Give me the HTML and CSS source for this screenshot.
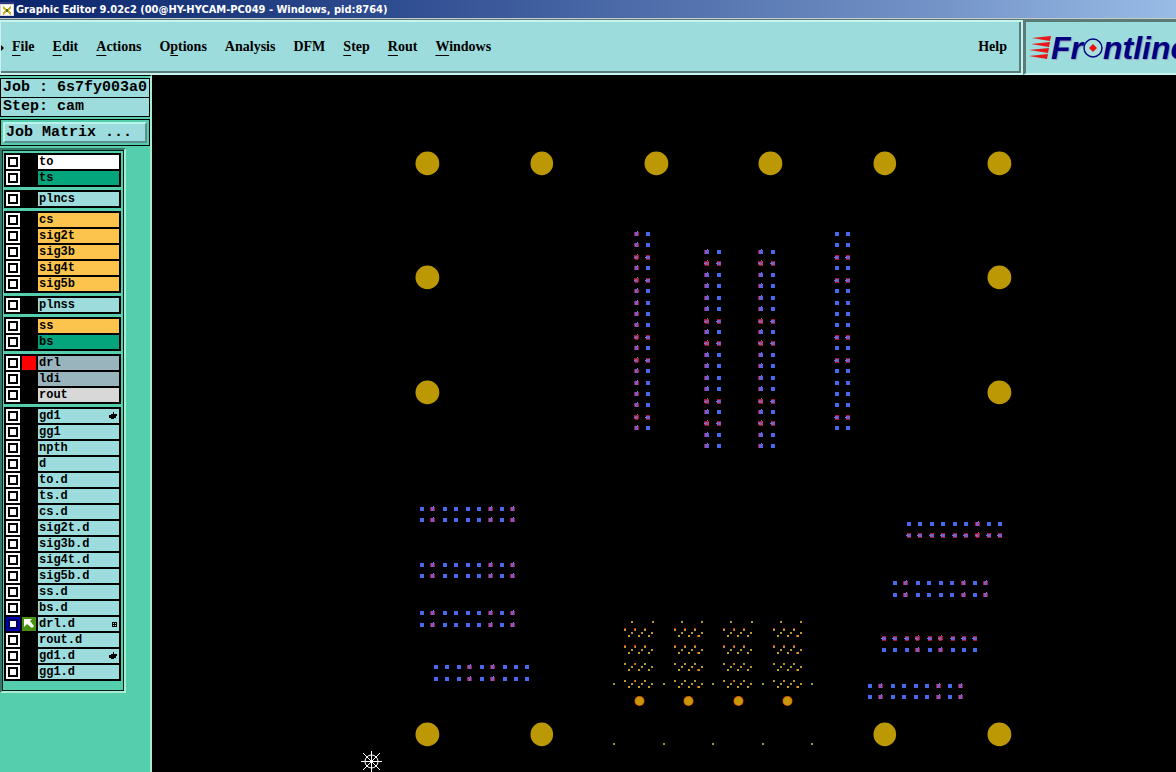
FILE: index.html
```html
<!DOCTYPE html>
<html lang="en">
<head>
    <meta charset="UTF-8">
    <title>Graphic Editor</title>
    <meta name="viewport" content="width=device-width, initial-scale=1.0"/>
    <link rel="stylesheet" href="styles.css">
</head>
<body>
    <div class="wrap">
        <header class="title">
            <svg width="15" height="15" viewBox="0 0 15 15" shape-rendering="crispEdges">
                <rect width="14" height="14" fill="#d8d8d8"/>
                <rect width="14" height="2" fill="#303880"/>
                <rect x="1" y="3" width="12" height="10" fill="#fff"/>
                <path d="M3 5l8 7M11 5l-8 7" stroke="#c8b820" stroke-width="2"/>
                <path d="M6 7h2v3H6z" fill="#606020"/>
            </svg>
            <span>Graphic Editor 9.02c2 (00@HY-HYCAM-PC049 - Windows, pid:8764)</span>
        </header>
        <div class="top">
            <nav class="menu">
                <svg class="grip" width="3" height="6" viewBox="0 0 3 6"><path d="M0 0l3 3-3 3z"/></svg>
                <button type="button"><u>F</u>ile</button>
                <button type="button"><u>E</u>dit</button>
                <button type="button"><u>A</u>ctions</button>
                <button type="button">O<u>p</u>tions</button>
                <button type="button">Analysis</button>
                <button type="button">DFM</button>
                <button type="button"><u>S</u>tep</button>
                <button type="button"><u>R</u>out</button>
                <button type="button"><u>W</u>indows</button>
                <button type="button" class="help">Help</button>
            </nav>
            <div class="brand">
                <svg class="speed" width="22" height="24" viewBox="0 0 22 24">
                    <path d="M3 2L22 0L21 5L15 4zM2 8L21 6L20 11L14 10zM0 14L20 12L19 17L13 16zM0 20L19 18L18 23L12 22z" fill="#e81818"/>
                </svg>
                <span>Fr</span>
                <svg class="target" width="20" height="20" viewBox="0 0 20 20">
                    <circle cx="10" cy="10" r="9" fill="#a8e0e0" stroke="#000080" stroke-width="1.4"/>
                    <path d="M10 6l4 4-4 4-4-4z" fill="#e81010"/>
                </svg>
                <span>ntline</span>
            </div>
        </div>
        <div class="main">
            <aside>
                <div class="job">
                    <p>Job : 6s7fy003a0</p>
                    <p>Step: cam</p>
                </div>
                <div class="matrix"><button type="button">Job Matrix ...</button></div>
                <div class="layers">
                    <div class="group">
                        <div class="row"><input type="checkbox" id="l1"><i></i><label for="l1" class="white">to</label></div>
                        <div class="row"><input type="checkbox" id="l2"><i></i><label for="l2" class="mask">ts</label></div>
                    </div>
                    <div class="group">
                        <div class="row"><input type="checkbox" id="l3"><i></i><label for="l3">plncs</label></div>
                    </div>
                    <div class="group">
                        <div class="row"><input type="checkbox" id="l4"><i></i><label for="l4" class="signal">cs</label></div>
                        <div class="row"><input type="checkbox" id="l5"><i></i><label for="l5" class="signal">sig2t</label></div>
                        <div class="row"><input type="checkbox" id="l6"><i></i><label for="l6" class="signal">sig3b</label></div>
                        <div class="row"><input type="checkbox" id="l7"><i></i><label for="l7" class="signal">sig4t</label></div>
                        <div class="row"><input type="checkbox" id="l8"><i></i><label for="l8" class="signal">sig5b</label></div>
                    </div>
                    <div class="group">
                        <div class="row"><input type="checkbox" id="l9"><i></i><label for="l9">plnss</label></div>
                    </div>
                    <div class="group">
                        <div class="row"><input type="checkbox" id="l10"><i></i><label for="l10" class="signal">ss</label></div>
                        <div class="row"><input type="checkbox" id="l11"><i></i><label for="l11" class="mask">bs</label></div>
                    </div>
                    <div class="group">
                        <div class="row"><input type="checkbox" id="l12"><i class="red"></i><label for="l12" class="drill">drl</label></div>
                        <div class="row"><input type="checkbox" id="l13"><i></i><label for="l13" class="drill">ldi</label></div>
                        <div class="row"><input type="checkbox" id="l14"><i></i><label for="l14" class="rout">rout</label></div>
                    </div>
                    <div class="group">
                        <div class="row"><input type="checkbox" id="l15"><i></i><label for="l15">gd1<svg width="8" height="8" viewBox="0 0 8 8"><path d="M4 0h1v2h3v2H7v2H5v1H2V6H0V3h2V2h2z"/></svg></label></div>
                        <div class="row"><input type="checkbox" id="l16"><i></i><label for="l16">gg1</label></div>
                        <div class="row"><input type="checkbox" id="l17"><i></i><label for="l17">npth</label></div>
                        <div class="row"><input type="checkbox" id="l18"><i></i><label for="l18">d</label></div>
                        <div class="row"><input type="checkbox" id="l19"><i></i><label for="l19">to.d</label></div>
                        <div class="row"><input type="checkbox" id="l20"><i></i><label for="l20">ts.d</label></div>
                        <div class="row"><input type="checkbox" id="l21"><i></i><label for="l21">cs.d</label></div>
                        <div class="row"><input type="checkbox" id="l22"><i></i><label for="l22">sig2t.d</label></div>
                        <div class="row"><input type="checkbox" id="l23"><i></i><label for="l23">sig3b.d</label></div>
                        <div class="row"><input type="checkbox" id="l24"><i></i><label for="l24">sig4t.d</label></div>
                        <div class="row"><input type="checkbox" id="l25"><i></i><label for="l25">sig5b.d</label></div>
                        <div class="row"><input type="checkbox" id="l26"><i></i><label for="l26">ss.d</label></div>
                        <div class="row"><input type="checkbox" id="l27"><i></i><label for="l27">bs.d</label></div>
                        <div class="row active"><input type="checkbox" id="l28" checked><i class="work"><svg width="14" height="14" viewBox="0 0 14 14"><path d="M2 2h8L8 4l4 5-2 2-5-4-3 3z" fill="#fff"/></svg></i><label for="l28">drl.d<svg width="5" height="5" viewBox="0 0 5 5" shape-rendering="crispEdges"><path d="M.5.5h4v4h-4zM2.5 0v5M0 2.5h5" fill="none" stroke="#000"/></svg></label></div>
                        <div class="row"><input type="checkbox" id="l29"><i></i><label for="l29">rout.d</label></div>
                        <div class="row"><input type="checkbox" id="l30"><i></i><label for="l30">gd1.d<svg width="8" height="8" viewBox="0 0 8 8"><path d="M4 0h1v2h3v2H7v2H5v1H2V6H0V3h2V2h2z"/></svg></label></div>
                        <div class="row"><input type="checkbox" id="l31"><i></i><label for="l31">gg1.d</label></div>
                    </div>
                </div>
            </aside>
            <svg class="board" id="board"></svg>
        </div>
    </div>
    <script src="board.js"></script>
</body>
</html>
```
FILE: styles.css
```css
* {
    margin: 0;
    padding: 0;
    box-sizing: border-box;
}
html,body{
    height:100%;
    overflow: hidden;
    background: #000;
}
button{
    border: 0;
    background: none;
    color: #000;
}
.wrap{
    height:100%;
    display: flex;
    flex-direction: column;
}
.title{
    flex: none;
    height: 19px;
    display: flex;
    align-items: center;
    gap: 1px;
    border-bottom: 1px solid #c8ccc8;
    background: linear-gradient(90deg,#0a246a,#2f4d91 34%,#7494c8 80%,#98bce6);
    color: #fff;
    font: bold 11px "DejaVu Sans Condensed","DejaVu Sans",sans-serif;
    white-space: nowrap;
}
.top{
    flex: none;
    height: 56px;
    display: flex;
    background: #9cdcdc;
    border-top: 1px solid #5a7c78;
}
.menu{
    flex: 1;
    display: flex;
    align-items: center;
    gap: 18px;
    padding-right: 14px;
    border: 2px solid #c8f4f0;
    border-left-width: 1px;
    box-shadow: inset -2px -2px #5a7c78;
}
.menu button{
    padding-bottom: 2px;
    font: bold 14px/20px "Liberation Serif",serif;
}
.menu u{
    text-underline-offset: 4px;
    text-decoration-thickness: 1px;
    text-decoration-skip-ink: none;
}
.menu .help{
    margin-left: auto;
}
.grip{
    margin-right: -10px;
}
.brand{
    flex: 0 0 153px;
    display: flex;
    align-items: center;
    padding-left: 3px;
    overflow: hidden;
    border: 2px solid #5a7c78;
    border-left-width: 3px;
    border-right: 0;
    border-bottom-color: #c8f4f0;
    color: #000080;
    font: italic bold 32px/48px "Liberation Sans",sans-serif;
    text-shadow: 1px 1px 1px #9898b8;
}
.brand svg{
    flex: none;
}
.main{
    flex: 1;
    min-height: 0;
    display: flex;
}
aside{
    flex: 0 0 152px;
    padding-top: 2px;
    border-top: 1px solid #000;
    border-right: 2px solid #a8ecd4;
    background: #55ceae;
    font: bold 15px/17px "Liberation Mono",monospace;
}
.job{
    border: 1px solid #000;
    background: #9cdcdc;
}
.job p{
    height: 18px;
    padding-left: 2px;
    white-space: nowrap;
}
.job p + p{
    height: 19px;
    border-top: 1px solid #000;
}
.matrix{
    margin-top: 2px;
    padding: 2px;
    border: 1px solid #000;
}
.matrix button{
    display: block;
    width: 100%;
    height: 21px;
    padding-left: 1px;
    border: 2px solid #b8f4ec;
    border-right-color: #5a9090;
    border-bottom-color: #5a9090;
    background: #9cdcdc;
    font: inherit;
    text-align: left;
}
.layers{
    width: 126px;
    margin-top: 2px;
    display: flex;
    flex-direction: column;
    gap: 3px;
    padding: 1px 3px 10px 1px;
    border: 2px solid #38786a;
    border-right-color: #a8ecd4;
    border-bottom-color: #a8ecd4;
    box-shadow: inset 0 0 0 1px #002018;
}
.group{
    margin-left: 1px;
    padding: 1px;
    background: #000;
}
.group:first-child{
    margin-top: 2px;
}
.row{
    display: flex;
    gap: 2px;
    padding: 1px;
}
.row input{
    appearance: none;
    flex: none;
    width: 14px;
    height: 14px;
    border: 2px solid #fff;
    background: #fff;
    box-shadow: inset 0 0 0 2px #000;
}
.active input{
    border-color: #0000b8;
    box-shadow: inset 0 0 0 2px #000050;
}
.row i{
    flex: none;
    width: 14px;
    height: 14px;
}
.row i svg{
    display: block;
}
.row .red{
    background: #f00;
}
.row .work{
    background: #489010;
}
.row label{
    flex: 1;
    display: flex;
    align-items: center;
    justify-content: space-between;
    height: 14px;
    padding: 0 2px 0 1px;
    background: #9cdcdc;
    font-size: 12px;
    line-height: 14px;
}
.row .white{
    background: #fff;
}
.row .mask{
    background: #04a47c;
}
.row .signal{
    background: #fcc44c;
}
.row .drill{
    background: #9ab4be;
}
.row .rout{
    background: #d8d8d8;
}
.board{
    flex: 1;
    min-width: 0;
    height: 100%;
    background: #000;
}
```
FILE: board.js
```js
var out='';
var BLUE='#4a68ec';
var PURPLE='#8058c8';
var RED='#a01838';

function rect(x,y,w,h,c){
    out+='<rect x="'+x+'" y="'+y+'" width="'+w+'" height="'+h+'" fill="'+c+'"/>';
}
// side: 1 = red left, 2 = red left and right; cap: red top and bottom
function pad(x,y,side,cap){
    x=Math.round(x);
    y=Math.round(y);
    var w=side==2?3:4;
    if(side){
        rect(x-3,y-2,1,4,RED);
        if(side==2)rect(x+1,y-2,1,4,RED);
        rect(x,y-3,1,1,'#7080e8');
    }
    if(cap){
        rect(x-2,y-2,w,5,RED);
        rect(x-2,y-1,w,3,side?'#a84888':PURPLE);
        rect(x-3,y,2,1,'#7080e8');
    }else{
        rect(x-2,y-2,w,4,side?PURPLE:BLUE);
        if(side==1)rect(x,y-2,2,4,BLUE);
    }
}
var PITCH=11.43;

// vertical connectors: x of both columns, first y, red sides, red rows
[
    [637,648,234,2,[2,4,9,11,16]],
    [707,719,252,1,[1,6,8,13,15]],
    [761,773,252,1,[1,6,8,13,15]],
    [837,848,234,0,[2,4,9,11,16]]
].forEach(function(c){
    for(var i=0;i<18;i++){
        var cap=c[4].indexOf(i)>-1;
        pad(c[0],c[2]+i*PITCH,c[3],cap);
        pad(c[1],c[2]+i*PITCH,0,cap);
    }
});

// horizontal connectors: x, y of both rows, red columns, row with red caps
[
    [422,509,520,[1,6,8]],
    [422,565,576,[1,6,8]],
    [422,613,625,[1,6,8]],
    [436,667,679,[3,5]],
    [909,524,535,[6],2],
    [895,583,595,[1,6,8]],
    [884,638,650,[3,5],1],
    [870,686,697,[1,6,8]]
].forEach(function(c){
    for(var i=0;i<9;i++){
        var side=c[3].indexOf(i)>-1?2:0;
        pad(c[0]+i*PITCH,c[1],side,c[4]==1);
        pad(c[0]+i*PITCH,c[2],side,c[4]==2);
    }
});

// via fields
[624,674,723,773].forEach(function(x,n){
    rect(x+7,621,2,2,'#b89828');
    rect(x+28-n%2,621,2,2,'#b89828');
    [629,646,663,680].forEach(function(y,r){
        for(var i=0;i<3;i++){
            if(r<2)rect(x+i*10,y-1,2,1,'#c83010');
            rect(x+i*10,y,2,2,'#b89828');
            rect(x+7+i*10,y+3,2,2,'#b89828');
            rect(x+4+i*10,y+6,2,2,'#c8a020');
        }
        if(n%2)rect(x+23,y+6,1,2,'#c83010');
        else rect(x+10,y,1,2,'#d85010');
    });
    var cx=x+15.5-n%2;
    out+='<circle cx="'+cx+'" cy="701" r="5" fill="#d85008"/>';
    out+='<circle cx="'+cx+'" cy="701" r="4.3" fill="#c89808"/>';
});
[613,663,712,762,811].forEach(function(x){
    rect(x,683,2,2,'#90a028');
    rect(x,743,2,2,'#90a028');
});

// tooling holes
[
    [427,163],[542,163],[656,163],[770,163],[885,163],[999,163],
    [427,277],[999,277],[427,392],[999,392],
    [427,734],[542,734],[885,734],[999,734]
].forEach(function(p){
    var slim=p[0]==542||p[0]==885;
    out+='<ellipse cx="'+(slim?p[0]-0.2:p[0]+0.4)+'" cy="'+(p[1]+0.4)+'" rx="'+(slim?11.3:11.9)+'" ry="11.9" fill="#bc9804"/>';
});

// origin mark
out+='<g fill="none" stroke="#fff"><circle cx="371.5" cy="761.5" r="6.5"/>'+
    '<path d="M361 761.5h21M371.5 751v21M363 753l17 17M380 753l-17 17"/></g>';

document.getElementById('board').innerHTML='<g transform="translate(-152,-75)">'+out+'</g>';
```
